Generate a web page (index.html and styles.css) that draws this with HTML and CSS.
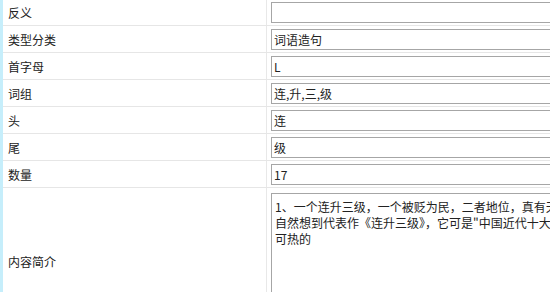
FILE: index.html
```html
<!DOCTYPE html>
<html lang="zh">
<head>
<meta charset="utf-8">
<link rel="stylesheet" href="styles.css">
</head>
<body>
<div class="page">
<table class="form">
  <tr><td class="label">反义</td><td class="field"><input class="txt" type="text" value=""></td></tr>
  <tr><td class="label">类型分类</td><td class="field"><input class="txt" type="text" value="词语造句"></td></tr>
  <tr><td class="label">首字母</td><td class="field"><input class="txt" type="text" value="L"></td></tr>
  <tr><td class="label">词组</td><td class="field"><input class="txt" type="text" value="连,升,三,级"></td></tr>
  <tr><td class="label">头</td><td class="field"><input class="txt" type="text" value="连"></td></tr>
  <tr><td class="label">尾</td><td class="field"><input class="txt" type="text" value="级"></td></tr>
  <tr><td class="label">数量</td><td class="field"><input class="txt" type="text" value="17"></td></tr>
  <tr class="tall"><td class="label">内容简介</td><td class="field"><textarea class="area" wrap="off">1、一个连升三级，一个被贬为民，二者地位，真有天壤之别。
自然想到代表作《连升三级》，它可是"中国近代十大传统相声"之一，炙手
可热的</textarea></td></tr>
</table>
</div>
</body>
</html>
```
FILE: styles.css
```css
html, body {
  margin: 0;
  padding: 0;
  background: #ffffff;
  overflow: hidden;
}
body {
  font-family: "Noto Sans CJK SC", "Microsoft YaHei", sans-serif;
  font-size: 12px;
  color: #222;
}
.page {
  border-left: 3px solid #c6eefb;
  width: 700px;
  margin-top: -1px;
}
.form {
  border-collapse: collapse;
  width: 100%;
}
.form td {
  border-bottom: 1px solid #e6e6e6;
  padding: 3px 4px 2px;
  vertical-align: middle;
}
.form .label {
  width: 254px;
  padding-left: 5px;
  border-right: 1px solid #e8e8e8;
  color: #222;
  white-space: nowrap;
}
.txt {
  display: block;
  box-sizing: border-box;
  width: 360px;
  height: 21px;
  margin: 0;
  padding: 0 2px;
  border: 1px solid #a6a6a6;
  font-family: "Noto Sans CJK SC", "Microsoft YaHei", sans-serif;
  font-size: 12px;
  color: #222;
  background: #fff;
  outline: none;
}
.tall td {
  height: 140px;
  padding-top: 3px;
  padding-bottom: 0;
}
.area {
  display: block;
  box-sizing: border-box;
  width: 360px;
  height: 137px;
  margin: 0;
  padding: 5px 3px 2px;
  border: 1px solid #a6a6a6;
  font-family: "Noto Sans CJK SC", "Microsoft YaHei", sans-serif;
  font-size: 12px;
  line-height: 16px;
  color: #222;
  resize: none;
  overflow: hidden;
  white-space: pre;
}
```
